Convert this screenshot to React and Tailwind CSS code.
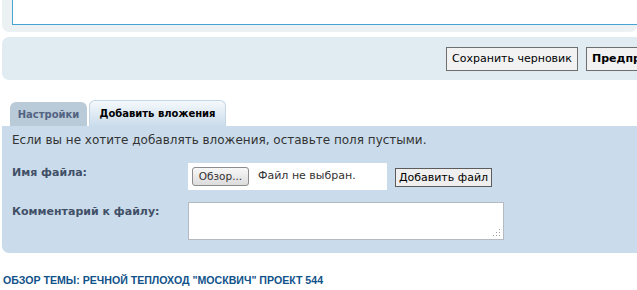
import React from 'react'

function App() {
    return (
        <div className="w-[637px] h-[290px] overflow-hidden bg-white font-['DejaVu_Sans',sans-serif]">
            {/* верхняя панель с полем сообщения */}
            <div className="ml-[2px] h-[32px] bg-[#ecf1f4] rounded-b-[7px] pl-[10px] pt-0">
                <div className="h-[25px] bg-white border-l border-b border-[#46a3d2]"></div>
            </div>

            {/* кнопки */}
            <div className="ml-[2px] mt-[5px] h-[43px] bg-[#e1ebf2] rounded-[7px] rounded-r-none flex items-center justify-end gap-[8px] overflow-hidden">
                <button className="h-[24px] w-[132px] bg-[#f2f2f2] border border-[#6f6f6f] text-[11px] text-black whitespace-nowrap shrink-0 leading-none">
                    Сохранить черновик
                </button>
                <button className="h-[24px] pl-[5px] w-[51px] bg-[#f2f2f2] border border-r-0 border-[#6f6f6f] text-[11px] font-bold text-black whitespace-nowrap shrink-0 overflow-hidden text-left leading-none">
                    Предпросмотр
                </button>
            </div>

            {/* вкладки */}
            <div className="mt-[20px] ml-[10px] flex items-end gap-[2px]">
                <div className="h-[24px] w-[77px] justify-center bg-[#b9cad8] rounded-t-[6px] flex items-center text-[10px] font-bold text-[#536482]">
                    Настройки
                </div>
                <div className="h-[26px] w-[137px] justify-center bg-gradient-to-b from-[#f5f9fc] to-[#cadceb] border border-b-0 border-[#c4d5e3] rounded-t-[6px] flex items-center text-[10px] font-bold text-black">
                    Добавить вложения
                </div>
            </div>

            {/* панель вложений */}
            <div className="ml-[2px] h-[127px] bg-[#cadceb] rounded-bl-[7px] pl-[10px] pt-[6px]">
                <p className="text-[12px] text-[#333] leading-[16px]">
                    Если вы не хотите добавлять вложения, оставьте поля пустыми.
                </p>

                <div className="mt-[15px] flex items-start">
                    <div className="w-[176px] pt-[2px] text-[11px] font-bold text-[#425067]">Имя файла:</div>
                    <div className="w-[199px] h-[27px] bg-white flex items-center pl-[4px] gap-[9px] text-[11px] text-[#333]">
                        <span className="h-[19px] w-[57px] justify-center flex items-center bg-gradient-to-b from-[#f8f8f8] to-[#dcdcdc] border border-[#8c8c8c] rounded-[3px] text-[10.5px]">
                            Обзор...
                        </span>
                        <span>Файл не выбран.</span>
                    </div>
                    <button className="ml-[8px] mt-[5px] h-[19px] w-[97px] bg-[#efefef] border border-[#5c5c5c] text-[11px] text-black leading-none whitespace-nowrap">
                        Добавить файл
                    </button>
                </div>

                <div className="mt-[12px] flex items-start">
                    <div className="w-[176px] pt-[2px] text-[11px] font-bold text-[#425067]">Комментарий к файлу:</div>
                    <div className="relative w-[316px] h-[38px] bg-white border border-[#b4bac0]">
                        <svg className="absolute right-[2px] bottom-[2px]" width="8" height="8" viewBox="0 0 8 8">
                            <g fill="#a0a0a0">
                                <rect x="6" y="0" width="1" height="1" />
                                <rect x="6" y="3" width="1" height="1" />
                                <rect x="3" y="3" width="1" height="1" />
                                <rect x="6" y="6" width="1" height="1" />
                                <rect x="3" y="6" width="1" height="1" />
                                <rect x="0" y="6" width="1" height="1" />
                            </g>
                        </svg>
                    </div>
                </div>
            </div>

            {/* ссылка на тему */}
            <div className="mt-[20px] pl-[3px] text-[10.6px] font-bold uppercase text-[#105289] font-['Liberation_Sans',sans-serif]">
                Обзор темы: Речной теплоход "Москвич" проект 544
            </div>
        </div>
    )
}

export default App
